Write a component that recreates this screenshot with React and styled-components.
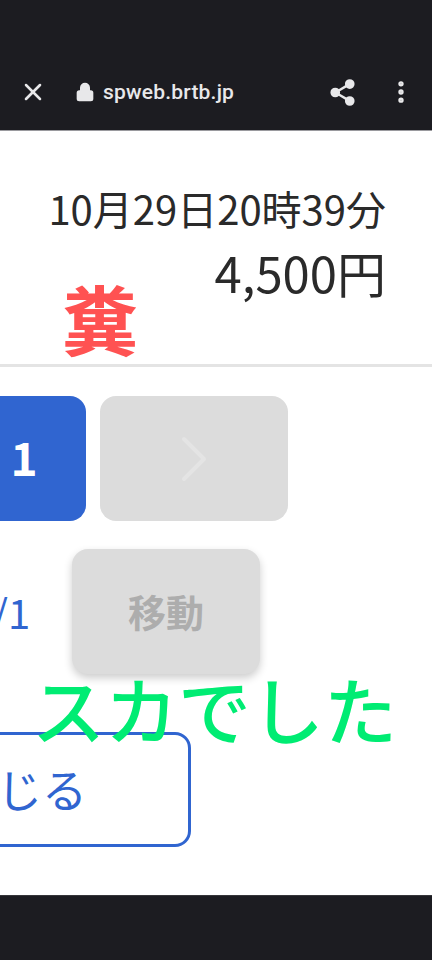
import React from "react";
import styled, { createGlobalStyle } from "styled-components";
import { X, Lock, Share2, MoreVertical, ChevronRight } from "lucide-react";

const GlobalStyle = createGlobalStyle`
  html, body {
    margin: 0;
    padding: 0;
    background: #1c1c21;
  }
  body {
    width: 432px;
    height: 960px;
    overflow: hidden;
    font-family: "Noto Sans CJK JP", "Noto Sans", sans-serif;
  }
`;

const Page = styled.div`
  display: flex;
  flex-direction: column;
  width: 432px;
  height: 960px;
  overflow: hidden;
`;

const BrowserBar = styled.header`
  display: flex;
  align-items: center;
  flex: none;
  box-sizing: border-box;
  height: 131px;
  padding: 54px 17px 0 19px;
  background: #1c1c21;
  color: #e8e8ea;
  border-bottom: 1px solid #9a9a9e;
`;

const Address = styled.div`
  display: flex;
  align-items: center;
  flex: 1;
  margin-left: 28px;
  gap: 8px;
  font-family: Roboto, sans-serif;
  font-size: 21px;
  font-weight: 500;
  letter-spacing: 0.2px;
`;

const BarIcon = styled.span`
  display: flex;
  align-items: center;
  margin-left: ${(p) => p.$gap || 0}px;
`;

const Main = styled.main`
  position: relative;
  flex: 1;
  background: #fff;
  overflow: hidden;
`;

const Info = styled.section`
  display: flex;
  flex-direction: column;
  align-items: flex-end;
  box-sizing: border-box;
  height: 236px;
  padding: 48px 46px 0 0;
  border-bottom: 3px solid #e4e4e4;
  color: #2a2a2a;
`;

const DateText = styled.div`
  font-size: 40px;
  line-height: 58px;
`;

const Price = styled.div`
  font-size: 49px;
  line-height: 70px;
`;

const Stamp = styled.div`
  position: absolute;
  left: 62px;
  top: 141px;
  font-size: 76px;
  line-height: 90px;
  font-weight: 700;
  color: #ff5252;
`;

const Result = styled.div`
  position: absolute;
  left: 32px;
  top: 526px;
  font-size: 73px;
  line-height: 100px;
  font-weight: 500;
  color: #00ec73;
  white-space: nowrap;
  z-index: 2;
`;

const Pager = styled.div`
  display: flex;
  gap: 14px;
  margin: 29px 0 0 -38px;
`;

const PageButton = styled.button`
  display: flex;
  align-items: center;
  justify-content: center;
  flex: none;
  box-sizing: border-box;
  width: ${(p) => (p.$active ? 124 : 188)}px;
  height: 125px;
  border: none;
  border-radius: 16px;
  padding: 0 0 ${(p) => (p.$active ? 6 : 0)}px;
  font-family: inherit;
  font-size: 46px;
  font-weight: 700;
  color: ${(p) => (p.$active ? "#fff" : "#e4e4e4")};
  background: ${(p) => (p.$active ? "#3065d0" : "#dcdcdc")};
`;

const MoveRow = styled.div`
  display: flex;
  align-items: center;
  gap: 42px;
  margin: 28px 0 0 -30px;
`;

const PageCount = styled.span`
  flex: none;
  width: 60px;
  text-align: right;
  font-size: 40px;
  color: #3065d0;
`;

const MoveButton = styled.button`
  flex: none;
  width: 188px;
  height: 125px;
  border: none;
  border-radius: 16px;
  padding: 0 0 2px;
  font-family: inherit;
  font-size: 38px;
  font-weight: 700;
  color: #adadad;
  background: #dcdcdc;
  box-shadow: 0 4px 8px rgba(0, 0, 0, 0.2);
`;

const CloseButton = styled.button`
  display: block;
  box-sizing: border-box;
  width: 343px;
  height: 115px;
  margin: 58px 0 0 -152px;
  border: 3px solid #3065d0;
  border-radius: 16px;
  padding: 0 0 2px;
  background: #fff;
  font-family: inherit;
  font-size: 45px;
  color: #3065d0;
`;

const BottomBar = styled.footer`
  flex: none;
  height: 65px;
  background: #1c1c21;
  border-top: 1px solid #36363a;
  box-sizing: border-box;
`;

export default function App() {
  return (
    <Page>
      <GlobalStyle />
      <BrowserBar>
        <X size={28} strokeWidth={2.2} />
        <Address>
          <Lock size={20} fill="currentColor" strokeWidth={2} />
          spweb.brtb.jp
        </Address>
        <BarIcon>
          <Share2 size={29} fill="currentColor" strokeWidth={2} />
        </BarIcon>
        <BarIcon $gap={30}>
          <MoreVertical size={28} strokeWidth={2.6} />
        </BarIcon>
      </BrowserBar>
      <Main>
        <Info>
          <DateText>10月29日20時39分</DateText>
          <Price>4,500円</Price>
        </Info>
        <Stamp>糞</Stamp>
        <Pager>
          <PageButton $active>1</PageButton>
          <PageButton>
            <ChevronRight size={80} strokeWidth={1.2} />
          </PageButton>
        </Pager>
        <MoveRow>
          <PageCount>1/1</PageCount>
          <MoveButton>移動</MoveButton>
        </MoveRow>
        <CloseButton>閉じる</CloseButton>
        <Result>スカでした</Result>
      </Main>
      <BottomBar />
    </Page>
  );
}
